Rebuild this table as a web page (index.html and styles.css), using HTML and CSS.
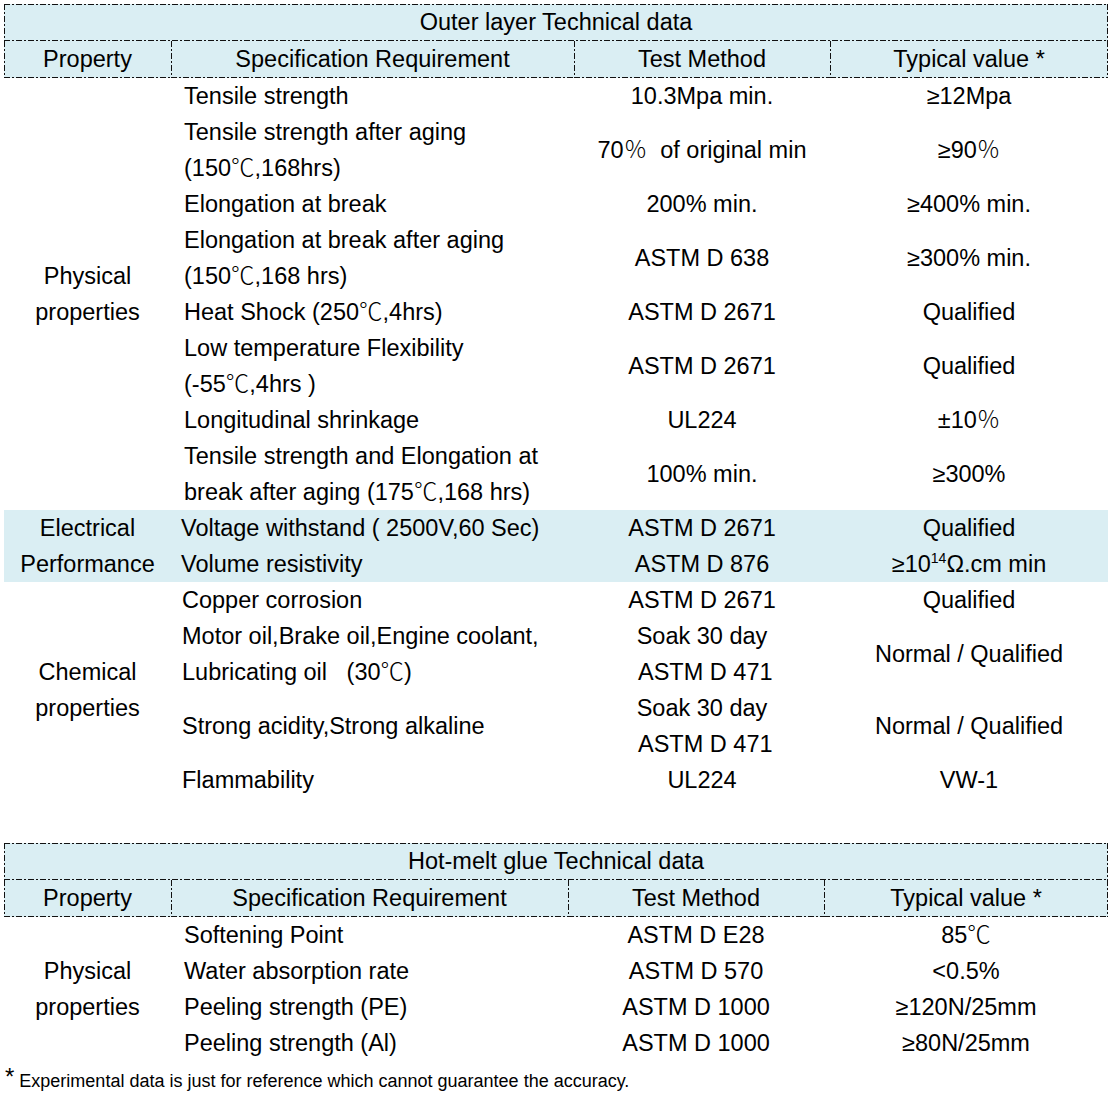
FILE: index.html
```html
<!DOCTYPE html>
<html lang="en">
<head>
<meta charset="utf-8">
<title>Technical data</title>
<link rel="stylesheet" href="styles.css">
</head>
<body>
<div class="page">
  <table class="spec">
    <colgroup>
      <col class="w-prop"><col class="w-req-a"><col class="w-test"><col class="w-val-a">
    </colgroup>
    <thead>
      <tr><th colspan="4" class="title">Outer layer Technical data</th></tr>
      <tr class="hdr">
        <th class="first">Property</th>
        <th>Specification Requirement</th>
        <th>Test Method</th>
        <th class="last">Typical value *</th>
      </tr>
    </thead>
    <tbody>
      <tr>
        <td rowspan="8" class="group">Physical<br>properties</td>
        <td class="req">Tensile strength</td>
        <td>10.3Mpa min.</td>
        <td>≥12Mpa</td>
      </tr>
      <tr>
        <td class="req">Tensile strength after aging<br>(150<span class="cjk">℃</span>,168hrs)</td>
        <td>70<span class="cjk">％</span>&nbsp; of original min</td>
        <td>≥90<span class="cjk">％</span></td>
      </tr>
      <tr>
        <td class="req">Elongation at break</td>
        <td>200% min.</td>
        <td>≥400% min.</td>
      </tr>
      <tr>
        <td class="req">Elongation at break after aging<br>(150<span class="cjk">℃</span>,168 hrs)</td>
        <td>ASTM D 638</td>
        <td>≥300% min.</td>
      </tr>
      <tr>
        <td class="req">Heat Shock (250<span class="cjk">℃</span>,4hrs)</td>
        <td>ASTM D 2671</td>
        <td>Qualified</td>
      </tr>
      <tr>
        <td class="req">Low temperature Flexibility<br>(-55<span class="cjk">℃</span>,4hrs )</td>
        <td>ASTM D 2671</td>
        <td>Qualified</td>
      </tr>
      <tr>
        <td class="req">Longitudinal shrinkage</td>
        <td>UL224</td>
        <td>±10<span class="cjk">％</span></td>
      </tr>
      <tr>
        <td class="req">Tensile strength and Elongation at<br>break after aging (175<span class="cjk">℃</span>,168 hrs)</td>
        <td>100% min.</td>
        <td>≥300%</td>
      </tr>
      <tr class="band">
        <td rowspan="2" class="group">Electrical<br>Performance</td>
        <td class="req tight">Voltage withstand ( 2500V,60 Sec)</td>
        <td>ASTM D 2671</td>
        <td>Qualified</td>
      </tr>
      <tr class="band">
        <td class="req tight">Volume resistivity</td>
        <td>ASTM D 876</td>
        <td>≥10<sup>14</sup>Ω.cm min</td>
      </tr>
      <tr>
        <td rowspan="4" class="group">Chemical<br>properties</td>
        <td class="req mid">Copper corrosion</td>
        <td>ASTM D 2671</td>
        <td>Qualified</td>
      </tr>
      <tr>
        <td class="req mid">Motor oil,Brake oil,Engine coolant,<br>Lubricating oil &nbsp;&nbsp;(30<span class="cjk">℃</span>)</td>
        <td>Soak 30 day<br>&nbsp;ASTM D 471</td>
        <td>Normal / Qualified</td>
      </tr>
      <tr>
        <td class="req mid">Strong acidity,Strong alkaline</td>
        <td>Soak 30 day<br>&nbsp;ASTM D 471</td>
        <td>Normal / Qualified</td>
      </tr>
      <tr>
        <td class="req mid">Flammability</td>
        <td>UL224</td>
        <td>VW-1</td>
      </tr>
    </tbody>
  </table>

  <table class="spec second">
    <colgroup>
      <col class="w-prop"><col class="w-req-b"><col class="w-test"><col class="w-val-b">
    </colgroup>
    <thead>
      <tr><th colspan="4" class="title">Hot-melt glue Technical data</th></tr>
      <tr class="hdr">
        <th class="first">Property</th>
        <th>Specification Requirement</th>
        <th>Test Method</th>
        <th class="last">Typical value *</th>
      </tr>
    </thead>
    <tbody>
      <tr>
        <td rowspan="4" class="group">Physical<br>properties</td>
        <td class="req">Softening Point</td>
        <td>ASTM D E28</td>
        <td>85<span class="cjk">℃</span></td>
      </tr>
      <tr>
        <td class="req">Water absorption rate</td>
        <td>ASTM D 570</td>
        <td>&lt;0.5%</td>
      </tr>
      <tr>
        <td class="req">Peeling strength (PE)</td>
        <td>ASTM D 1000</td>
        <td>≥120N/25mm</td>
      </tr>
      <tr>
        <td class="req">Peeling strength (Al)</td>
        <td>ASTM D 1000</td>
        <td>≥80N/25mm</td>
      </tr>
    </tbody>
  </table>

  <p class="note"><span class="star">*</span> Experimental data is just for reference which cannot guarantee the accuracy.</p>
</div>
</body>
</html>
```

FILE: styles.css
```css
:root {
  --ink: #111;
  --tint: #daeef3;
  --hl: repeating-linear-gradient(90deg, var(--ink) 0 6px, transparent 6px 8px, var(--ink) 8px 10px, transparent 10px 12px);
  --vl: repeating-linear-gradient(180deg, var(--ink) 0 6px, transparent 6px 8px, var(--ink) 8px 10px, transparent 10px 12px);
}

html, body {
  margin: 0;
  padding: 0;
  background: #fff;
}

body {
  font-family: "Liberation Sans", Arial, "Noto Sans CJK SC", sans-serif;
  color: #000;
}

.page {
  padding: 4px 0 0 4px;
  width: 1104px;
}

.spec {
  width: 1104px;
  table-layout: fixed;
  border-collapse: separate;
  border-spacing: 0;
  font-size: 23.5px;
}

.second {
  margin-top: 45px;
}

.w-prop { width: 167px; }
.w-req-a { width: 403px; }
.w-req-b { width: 397px; }
.w-test { width: 256px; }
.w-val-a { width: 278px; }
.w-val-b { width: 284px; }

.spec th {
  font-weight: normal;
  height: 37px;
  line-height: 37px;
  padding: 0;
  text-align: center;
  white-space: nowrap;
}

.spec th.title {
  background:
    var(--hl) left top / 100% 1px no-repeat,
    var(--hl) left bottom / 100% 1px no-repeat,
    var(--vl) left top / 1px 100% no-repeat,
    var(--vl) right top / 1px 100% no-repeat,
    var(--tint);
}

.spec .hdr th {
  background:
    var(--hl) left bottom / 100% 1px no-repeat,
    var(--vl) left top / 1px 100% no-repeat,
    var(--tint);
}

.spec .hdr th.last {
  background:
    var(--hl) left bottom / 100% 1px no-repeat,
    var(--vl) left top / 1px 100% no-repeat,
    var(--vl) right top / 1px 100% no-repeat,
    var(--tint);
}

.spec td {
  padding: 0;
  line-height: 36px;
  text-align: center;
  vertical-align: middle;
  white-space: nowrap;
}

.spec td.req {
  text-align: left;
  padding-left: 13px;
}

.spec td.req.tight {
  padding-left: 10px;
}

.spec td.req.mid {
  padding-left: 11px;
}

.band td {
  background: var(--tint);
}

.cjk {
  font-family: "Noto Sans CJK SC", "Noto Sans CJK JP", sans-serif;
  font-weight: 200;
  line-height: 0;
}

.spec sup {
  font-size: 14px;
  line-height: 0;
  vertical-align: 9px;
}

.note {
  margin: 0;
  padding: 2px 0 0 1px;
  line-height: 37px;
  font-size: 18px;
  white-space: nowrap;
}

.note .star {
  font-size: 24px;
  line-height: 0;
  vertical-align: 2px;
}
```
